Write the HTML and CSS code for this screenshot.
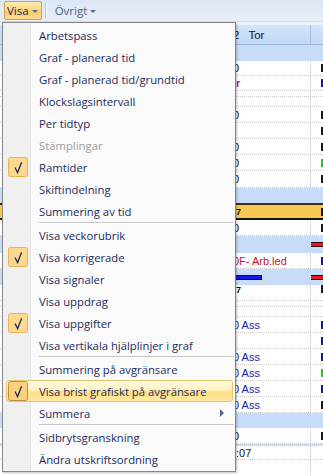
FILE: index.html
```html
<!DOCTYPE html>
<html lang="sv">
<head>
<meta charset="utf-8">
<title>Visa</title>
<link rel="stylesheet" href="styles.css">
</head>
<body>
<div class="app">
  <div class="toolbar">
    <div class="tb-btn active"><span>Visa</span><span class="caret"></span></div>
    <div class="tb-sep"></div>
    <div class="tb-btn"><span>Övrigt</span><span class="caret"></span></div>
  </div>
  <div class="gap"></div>
  <div class="grid">
    <div class="row head"><div class="c1"></div><div class="c2">2<span class="tor">Tor</span></div><div class="c3"></div></div>
    <div class="row band h16"><div class="c1"></div><div class="c2"></div><div class="c3"></div></div>
    <div class="row w h15"><div class="c1"></div><div class="c2">0</div><div class="c3"><span class="mk dark"></span></div></div>
    <div class="row w h15"><div class="c1"></div><div class="c2"><span class="frag mag">r</span></div><div class="c3"><span class="mk blue"></span></div></div>
    <div class="row w h6"><div class="c1"></div><div class="c2"></div><div class="c3"></div></div>
    <div class="row w h10"><div class="c1"></div><div class="c2"></div><div class="c3"></div></div>
    <div class="row w h16"><div class="c1"></div><div class="c2">0</div><div class="c3"><span class="mk dark"></span></div></div>
    <div class="row w h16"><div class="c1"></div><div class="c2"></div><div class="c3"><span class="mk dark"></span></div></div>
    <div class="row w h16"><div class="c1"></div><div class="c2">0</div><div class="c3"><span class="mk dark"></span></div></div>
    <div class="row w h16"><div class="c1"></div><div class="c2">0</div><div class="c3"><span class="mk green"></span></div></div>
    <div class="row w h17"><div class="c1"></div><div class="c2">0</div><div class="c3"><span class="mk dark"></span></div></div>
    <div class="row band h15"><div class="c1"></div><div class="c2"></div><div class="c3"></div></div>
    <div class="row orange"><div class="c1"></div><div class="c2"><span class="frag seven">7</span></div><div class="c3"><span class="mk dark"></span></div></div>
    <div class="row w h16"><div class="c1"></div><div class="c2">0</div><div class="c3"><span class="mk dark"></span></div></div>
    <div class="row band h17"><div class="c1"></div><div class="c2"></div><div class="c3"><span class="bar red"></span></div></div>
    <div class="row w h16"><div class="c1"></div><div class="c2 redtxt">0F- Arb.led</div><div class="c3"><span class="mk blue"></span></div></div>
    <div class="row band h16"><div class="c1"></div><div class="c2"><span class="bar blue"></span></div><div class="c3"><span class="bar red"></span></div></div>
    <div class="row w h16 top"><div class="c1"></div><div class="c2"><span class="frag seven">7</span></div><div class="c3"><span class="mk dark"></span></div></div>
    <div class="row w h6"><div class="c1"></div><div class="c2"></div><div class="c3"></div></div>
    <div class="row w h10"><div class="c1"></div><div class="c2"></div><div class="c3"></div></div>
    <div class="row w h16"><div class="c1"></div><div class="c2 ass">0 Ass</div><div class="c3"><span class="mk blue"></span></div></div>
    <div class="row w h16"><div class="c1"></div><div class="c2"></div><div class="c3"><span class="mk blue"></span></div></div>
    <div class="row w h16"><div class="c1"></div><div class="c2 ass">0 Ass</div><div class="c3"><span class="mk blue"></span></div></div>
    <div class="row w h16"><div class="c1"></div><div class="c2 ass">0 Ass</div><div class="c3"><span class="mk green"></span></div></div>
    <div class="row w h16"><div class="c1"></div><div class="c2 ass">0 Ass</div><div class="c3"><span class="mk blue"></span></div></div>
    <div class="row w h16"><div class="c1"></div><div class="c2 ass">0 Ass</div><div class="c3"><span class="mk dark"></span></div></div>
    <div class="row band h15"><div class="c1"></div><div class="c2"></div><div class="c3"></div></div>
    <div class="row w h16"><div class="c1"></div><div class="c2">0</div><div class="c3"><span class="mk dark"></span></div></div>
    <div class="row band h2"><div class="c1"></div><div class="c2"></div><div class="c3"></div></div>
    <div class="row w h14"><div class="c1"></div><div class="c2"><span class="frag">:07</span></div><div class="c3"></div></div>
    <div class="row w h16 last"><div class="c1"></div><div class="c2"></div><div class="c3"></div></div>
  </div>

  <div class="menu">
    <div class="item"><span class="nochk"></span><span class="lbl">Arbetspass</span></div>
    <div class="item"><span class="nochk"></span><span class="lbl">Graf - planerad tid</span></div>
    <div class="item"><span class="nochk"></span><span class="lbl">Graf - planerad tid/grundtid</span></div>
    <div class="item"><span class="nochk"></span><span class="lbl">Klockslagsintervall</span></div>
    <div class="item"><span class="nochk"></span><span class="lbl">Per tidtyp</span></div>
    <div class="item disabled"><span class="nochk"></span><span class="lbl">Stämplingar</span></div>
    <div class="item"><svg class="chk" width="20" height="20" viewBox="0 0 20 20"><rect x="0.5" y="0.5" width="19" height="19" rx="2" class="box"/><polyline points="7,10.5 9.6,15.6 13.6,5.2" class="tick"/></svg><span class="lbl">Ramtider</span></div>
    <div class="item"><span class="nochk"></span><span class="lbl">Skiftindelning</span></div>
    <div class="item"><span class="nochk"></span><span class="lbl">Summering av tid</span></div>
    <div class="sep"></div>
    <div class="item"><span class="nochk"></span><span class="lbl">Visa veckorubrik</span></div>
    <div class="item"><svg class="chk" width="20" height="20" viewBox="0 0 20 20"><rect x="0.5" y="0.5" width="19" height="19" rx="2" class="box"/><polyline points="7,10.5 9.6,15.6 13.6,5.2" class="tick"/></svg><span class="lbl">Visa korrigerade</span></div>
    <div class="item"><span class="nochk"></span><span class="lbl">Visa signaler</span></div>
    <div class="item"><span class="nochk"></span><span class="lbl">Visa uppdrag</span></div>
    <div class="item"><svg class="chk" width="20" height="20" viewBox="0 0 20 20"><rect x="0.5" y="0.5" width="19" height="19" rx="2" class="box"/><polyline points="7,10.5 9.6,15.6 13.6,5.2" class="tick"/></svg><span class="lbl">Visa uppgifter</span></div>
    <div class="item"><span class="nochk"></span><span class="lbl">Visa vertikala hjälplinjer i graf</span></div>
    <div class="sep"></div>
    <div class="item"><span class="nochk"></span><span class="lbl">Summering på avgränsare</span></div>
    <div class="item hot"><svg class="chk" width="20" height="20" viewBox="0 0 20 20"><rect x="0.5" y="0.5" width="19" height="19" rx="2" class="box"/><polyline points="7,10.5 9.6,15.6 13.6,5.2" class="tick"/></svg><span class="lbl">Visa brist grafiskt på avgränsare</span></div>
    <div class="item"><span class="nochk"></span><span class="lbl">Summera</span><span class="sub"></span></div>
    <div class="sep"></div>
    <div class="item"><span class="nochk"></span><span class="lbl">Sidbrytsgranskning</span></div>
    <div class="item"><span class="nochk"></span><span class="lbl">Ändra utskriftsordning</span></div>
  </div>
</div>
</body>
</html>
```
FILE: styles.css
```css
* { box-sizing: border-box; }
html, body { margin: 0; padding: 0; }
body {
  width: 323px;
  height: 476px;
  overflow: hidden;
  background: #ffffff;
  font-family: "Open Sans", "Noto Sans", sans-serif;
}
.app {
  position: relative;
  width: 323px;
  height: 476px;
  overflow: hidden;
  background: #ffffff;
}

/* toolbar */
.toolbar {
  height: 22px;
  display: flex;
  align-items: center;
  padding-left: 4px;
  background: linear-gradient(#dce6f4, #e7eef8);
  border-bottom: 1px solid #d3deee;
}
.tb-btn {
  height: 19px;
  display: flex;
  align-items: center;
  gap: 3px;
  padding: 0 3px 0 2px;
  font-size: 11.5px;
  color: #50618a;
  border: 1px solid transparent;
  border-radius: 2px;
}
.tb-btn.active {
  color: #1b2b5e;
  border-color: #c9a253;
  background: linear-gradient(#fde9b2, #fcd888 45%, #fbcd6b 55%, #fcd98c);
}
.caret {
  width: 0;
  height: 0;
  border-left: 3px solid transparent;
  border-right: 3px solid transparent;
  border-top: 3px solid #5b6b8e;
  margin-top: 1px;
}
.tb-sep {
  width: 1px;
  height: 15px;
  background: #b7c7de;
  box-shadow: 1px 0 #f4f8fc;
  margin: 0 6px 0 3px;
}
.gap {
  height: 3px;
  background: #edf2fa;
}

/* background grid */
.grid {
  display: flex;
  flex-direction: column;
  font-family: "Liberation Sans", Arial, sans-serif;
  font-size: 11px;
}
.row {
  display: grid;
  grid-template-columns: 233px 78px 12px;
  overflow: hidden;
}
.row > div { overflow: hidden; white-space: nowrap; display: flex; align-items: center; }
.c2 { border-right: 1px dotted #c4c4c4; color: #111; }
.c3 { padding-left: 10px; }
.head {
  height: 20px;
  background: linear-gradient(#d3e4fa, #c3d8f6);
  border-bottom: 1px solid #9bb5da;
  color: #4a5d87;
  font-size: 11.5px;
}
.head .c2 { border-right: 1px solid #a7bfdf; }
.tor { margin-left: 9px; }
.band { background: #c6dcf9; }
.band .c2 { border-right-color: transparent; }
.w { border-bottom: 1px dotted #c9c9c9; }
.h2 { height: 2px; }
.h6 { height: 6px; }
.h10 { height: 10px; }
.h14 { height: 14px; }
.h15 { height: 15px; }
.h16 { height: 16px; }
.h17 { height: 17px; }
.last { border-bottom: none; }
.orange {
  height: 17px;
  background: #f8c752;
  border-top: 2px solid #3a2c1a;
  border-bottom: 2px solid #161616;
}
.orange .c2 { border-right-color: transparent; }
.top > div { align-items: flex-start; }
.frag { padding-left: 3px; }
.mag { color: #b02590; font-weight: bold; }
.seven { color: #111; font-weight: bold; font-size: 9px; }
.redtxt { color: #c0141e; }
.ass { color: #1c22a8; }
.mk { width: 2px; height: 8px; flex: none; }
.mk.dark { background: #1a1a1a; }
.mk.blue { background: #1a1aa8; }
.mk.green { background: #22c822; }
.bar { display: block; height: 5px; flex: none; border: 1px solid #30080a; }
.bar.red { background: #e01c1c; width: 14px; margin-left: -11px; }
.bar.blue { background: #1616e0; border-color: #0a0a40; width: 29px; margin-left: 0; }

/* dropdown menu */
.menu {
  position: absolute;
  left: 2px;
  top: 22px;
  width: 234px;
  padding: 1px 1px;
  border: 1px solid #868686;
  background: linear-gradient(to right, #f0f0f0 0, #f0f0f0 27px, #e2e3e3 27px, #e2e3e3 28px, #ffffff 28px, #ffffff 29px, #fafafa 29px);
  box-shadow: 1px 1px 2px rgba(0, 0, 0, 0.25);
  display: flex;
  flex-direction: column;
}
.item {
  height: 22px;
  margin: 0 1px 0 2px;
  display: flex;
  align-items: center;
  font-size: 11.3px;
  color: #1b2b5e;
  border: 1px solid transparent;
  border-radius: 3px;
  padding: 0 0 0 1px;
}
.nochk { width: 20px; height: 20px; flex: none; }
.chk { flex: none; display: block; }
.chk .box { fill: #fcd98f; stroke: #eeb052; stroke-width: 1; }
.chk .tick { fill: none; stroke: #1b2b5e; stroke-width: 1.3; stroke-linejoin: miter; }
.lbl { margin-left: 11px; white-space: nowrap; }
.disabled { color: #a0a0a0; }
.hot {
  border-color: #e6c469;
  background: linear-gradient(#fffbe4, #fff2c0 45%, #ffdf82 55%, #ffe8a4);
}
.hot .chk .box { fill: #fbd27c; stroke: #c58e3c; }
.sub {
  margin-left: auto;
  margin-right: 8px;
  width: 0;
  height: 0;
  border-top: 4px solid transparent;
  border-bottom: 4px solid transparent;
  border-left: 4px solid #53658a;
}
.sep {
  height: 2px;
  margin-left: 35px;
  border-top: 1px solid #c5c5c5;
  border-bottom: 1px solid #ffffff;
}
```
